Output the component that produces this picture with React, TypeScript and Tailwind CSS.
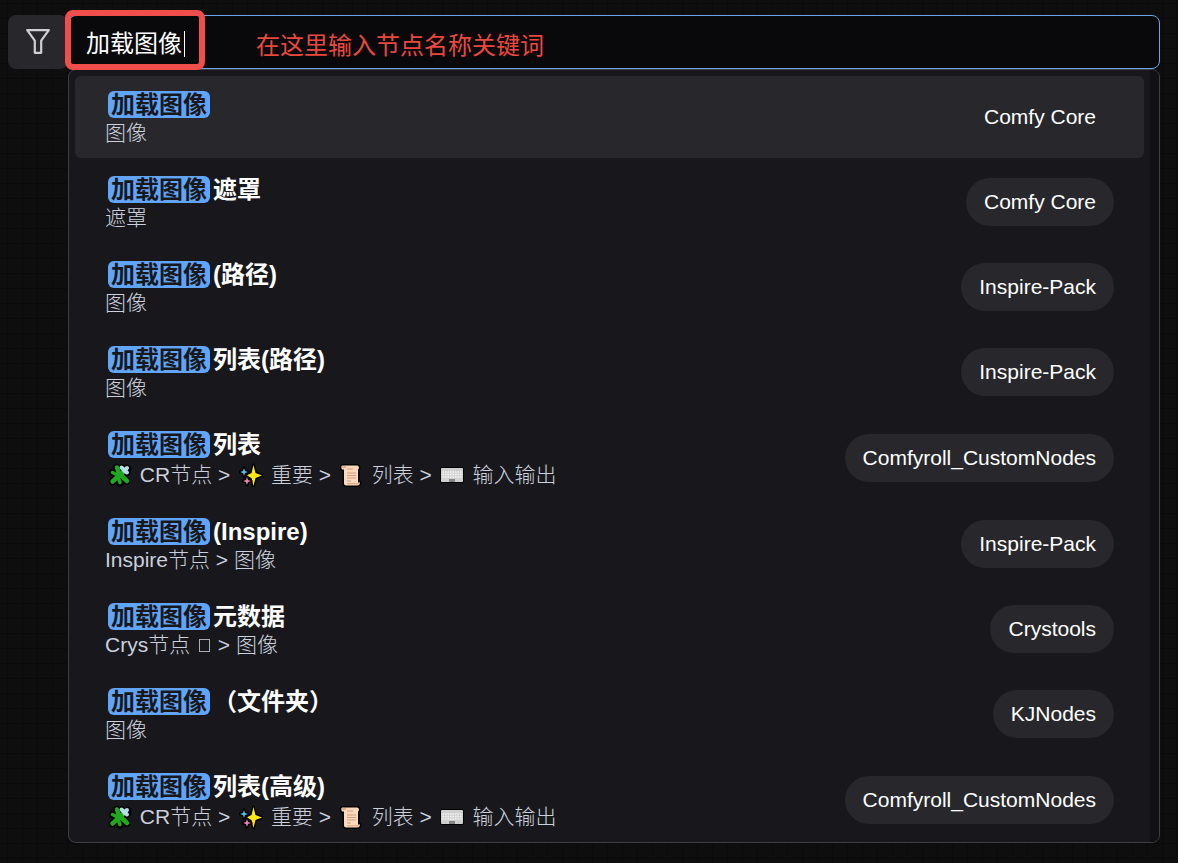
import React from "react";

type IconName = "puzzle" | "sparkles" | "scroll" | "keyboard" | "missing";

type Crumb = { label: string; icon?: IconName; iconAfter?: IconName };

type NodeResult = {
  suffix: string;
  path: Crumb[];
  pack: string;
};

const QUERY = "加载图像";

const crPath: Crumb[] = [
  { label: "CR节点", icon: "puzzle" },
  { label: "重要", icon: "sparkles" },
  { label: "列表", icon: "scroll" },
  { label: "输入输出", icon: "keyboard" },
];

const results: NodeResult[] = [
  { suffix: "", path: [{ label: "图像" }], pack: "Comfy Core" },
  { suffix: "遮罩", path: [{ label: "遮罩" }], pack: "Comfy Core" },
  { suffix: "(路径)", path: [{ label: "图像" }], pack: "Inspire-Pack" },
  { suffix: "列表(路径)", path: [{ label: "图像" }], pack: "Inspire-Pack" },
  { suffix: "列表", path: crPath, pack: "Comfyroll_CustomNodes" },
  { suffix: "(Inspire)", path: [{ label: "Inspire节点" }, { label: "图像" }], pack: "Inspire-Pack" },
  { suffix: "元数据", path: [{ label: "Crys节点", iconAfter: "missing" }, { label: "图像" }], pack: "Crystools" },
  { suffix: "（文件夹）", path: [{ label: "图像" }], pack: "KJNodes" },
  { suffix: "列表(高级)", path: crPath, pack: "Comfyroll_CustomNodes" },
];

const FilterIcon = () => (
  <svg viewBox="0 0 26 28" className="h-7 w-[26px]" fill="none" stroke="#cfcfd6" strokeWidth="2.2" strokeLinejoin="round" aria-hidden="true">
    <path d="M2.2 2.2h21.6l-7.6 10.4v12.2H9.8V12.6z" />
  </svg>
);

const PathIcon = ({ name }: { name: IconName }) => {
  if (name === "missing") {
    return (
      <span className="inline-flex w-4 justify-center">
        <span className="h-[13px] w-[11px] border border-[#a9adb8]" />
      </span>
    );
  }
  return (
    <span className="inline-flex w-[29px] justify-center">
      <svg viewBox="0 0 24 24" className="h-6 w-6" aria-hidden="true">
        {name === "puzzle" && (
          <g fill="none" strokeLinecap="round" strokeLinejoin="round">
            {/* dark outline, then the pale piece under the green one */}
            <path stroke="#000" strokeWidth="7.5" d="M8.500 4.500l10 13.500M4.500 18.500l15-13M4.500 9.500l5 2.500M12 14v6M14 5l5 4" />
            <path stroke="#b9dcea" strokeWidth="4" d="M13.500 4.500l5.500 5M14 10l5-5" />
            <path stroke="#20a81e" strokeWidth="4.5" d="M9 4.500l2 6 8 7.500M4.500 18.500l9-8" />
            <path stroke="#20a81e" strokeWidth="3.5" d="M4.500 9.500l6 3M9.500 13l2.500 6.500" />
          </g>
        )}
        {name === "sparkles" && (
          <g stroke="#000" strokeWidth="3" strokeLinejoin="round" paintOrder="stroke">
            <path fill="#ffe619" d="M14.5 2l2 8 6.5 2.5-6.5 2.5-2 8-2-8-5-2.5 5-2.5z" />
            <path fill="#4cc2f0" d="M5 5l1 3 3 1-3 1-1 3-1-3-3-1 3-1z" />
            <path fill="#f083ad" d="M8 14l1 3 3 1-3 1-1 3-1-3-3-1 3-1z" />
          </g>
        )}
        {name === "scroll" && (
          <>
            <path fill="#fbd9bd" stroke="#000" strokeWidth="3" strokeLinejoin="round" paintOrder="stroke" d="M3 2.500H18q2 0 2 3l-1 1v13h2q0 3-3 3H7q-2 0-2-2V6.500H3q-1.500-3 0-4z" />
            <path fill="#e8b08a" d="M3 3h4v2H3zM8 20h12v1.500H8z" />
            <path stroke="#d0a080" strokeWidth="1.200" d="M8 6h6M8 10h9M8 12.500h9M8 15h9M8 18h4" />
          </>
        )}
        {name === "keyboard" && (
          <>
            <rect x="1" y="5" width="22" height="14" rx="1" fill="#d0d0d0" stroke="#000" strokeWidth="2" paintOrder="stroke" />
            <path stroke="#f4f4f4" strokeWidth="1.500" strokeDasharray="1.500 1" d="M2.500 9h19M2.500 11.500h19M2.500 14h19" />
            <path fill="#858585" d="M9 16h6v3H9z" />
          </>
        )}
      </svg>
    </span>
  );
};

const NodePath = ({ path }: { path: Crumb[] }) => (
  <div className="flex items-center whitespace-pre text-[21px] leading-7 font-light text-[#cbd0dc]">
    {path.map((crumb, i) => (
      <React.Fragment key={crumb.label}>
        {i > 0 && <span className="font-normal">{" > "}</span>}
        {crumb.icon && <PathIcon name={crumb.icon} />}
        <span>{crumb.icon ? ` ${crumb.label}` : crumb.label}</span>
        {crumb.iconAfter && (
          <>
            <span> </span>
            <PathIcon name={crumb.iconAfter} />
          </>
        )}
      </React.Fragment>
    ))}
  </div>
);

const ResultRow = ({ node, active }: { node: NodeResult; active: boolean }) => {
  const tall = node.path.some((crumb) => crumb.icon);
  return (
    <li
      role="option"
      aria-selected={active}
      className={`flex items-center justify-between rounded-md px-[30px] ${tall ? "h-[84px]" : "h-[82px]"} ${active ? "bg-[#28282c]" : ""}`}
    >
      <div className={`flex flex-col pt-1 ${tall ? "gap-[2px]" : ""}`}>
        <div className="text-2xl leading-7 font-bold text-white">
          <mark className="mx-[3px] inline-block h-[27px] rounded-md bg-[#60a5fa] px-[3px] leading-[27px] text-[#18181b]">{QUERY}</mark>
          {node.suffix}
        </div>
        <NodePath path={node.path} />
      </div>
      <span className="rounded-full bg-[#28282c] px-[18px] py-[10px] text-[21px] leading-7 text-white">{node.pack}</span>
    </li>
  );
};

export default function App() {
  return (
    <main className="min-h-screen bg-[#0e0e0e] bg-[linear-gradient(#0a0a0a_1px,transparent_1px),linear-gradient(90deg,#0a0a0a_1px,transparent_1px)] bg-[size:15px_15px] bg-position-[7px_3px] pt-[15px] pr-[18px] pb-5 pl-2 font-['Liberation_Sans','Noto_Sans_CJK_SC',sans-serif]">
      <div className="flex h-[54px]">
        <button type="button" aria-label="Filter" className="flex w-[60px] shrink-0 items-center justify-center rounded-lg bg-[#28282c]">
          <FilterIcon />
        </button>
        <div className="relative flex flex-1 items-center rounded-lg border border-[#6ba3ea] bg-[#09090b] pt-1 pl-[17px]">
          <input
            type="text"
            aria-label="Search nodes"
            defaultValue={QUERY}
            className="w-[98px] bg-transparent text-2xl leading-7 text-white outline-none"
          />
          <span className="h-[26px] w-px bg-white" />
          {/* callout around the search text */}
          <div className="pointer-events-none absolute -top-[6px] -left-1 h-[60px] w-[140px] rounded-lg border-6 border-[#f04e4a]" />
          <p className="pointer-events-none absolute top-4 left-[187px] text-2xl leading-7 whitespace-nowrap text-[#e9483f]">
            在这里输入节点名称关键词
          </p>
        </div>
      </div>
      <div className="ml-[60px] flex overflow-hidden rounded-lg border border-[#3f3f46] bg-[#18181c]">
        <ul role="listbox" aria-label="Results" className="flex flex-1 flex-col gap-[3px] px-[6px] pt-[6px]">
          {results.map((node, i) => (
            <ResultRow key={node.suffix} node={node} active={i === 0} />
          ))}
        </ul>
        <div className="w-[9px] bg-[#111113]" />
      </div>
    </main>
  );
}
